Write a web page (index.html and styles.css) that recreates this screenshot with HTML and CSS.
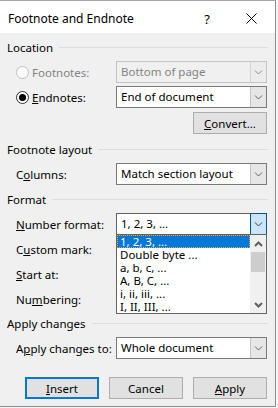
FILE: index.html
```html
<!DOCTYPE html>
<html>
<head>
    <link rel="stylesheet" href="styles.css">
</head>
<body>
    <div class="dialog">
        <div class="titlebar">
            <span class="title">Footnote and Endnote</span>
            <span class="help">?</span>
            <svg class="close" width="11" height="11" viewBox="0 0 11 11">
                <path d="M0.5 0.5 L10.5 10.5 M10.5 0.5 L0.5 10.5" stroke="#000" stroke-width="1" fill="none"/>
            </svg>
        </div>

        <div class="content">
            <div class="group-head"><span>Location</span></div>
            <div class="row first">
                <label class="label radio disabled"><span class="dot"></span>Footnotes:</label>
                <div class="combo disabled">
                    <span class="value">Bottom of page</span>
                    <span class="arrow"><svg width="9" height="5" viewBox="0 0 9 5"><path d="M1 0.5 L4.5 4 L8 0.5" fill="none" stroke="#8a8a8a"/></svg></span>
                </div>
            </div>
            <div class="row">
                <label class="label radio"><span class="dot checked"></span><span><u>E</u>ndnotes:</span></label>
                <div class="combo">
                    <span class="value">End of document</span>
                    <span class="arrow"><svg width="9" height="5" viewBox="0 0 9 5"><path d="M1 0.5 L4.5 4 L8 0.5" fill="none" stroke="#606060"/></svg></span>
                </div>
            </div>
            <div class="row right convert-row">
                <button class="btn"><u>C</u>onvert...</button>
            </div>

            <div class="group-head spaced"><span>Footnote layout</span></div>
            <div class="row first">
                <label class="label">C<u>o</u>lumns:</label>
                <div class="combo">
                    <span class="value">Match section layout</span>
                    <span class="arrow"><svg width="9" height="5" viewBox="0 0 9 5"><path d="M1 0.5 L4.5 4 L8 0.5" fill="none" stroke="#606060"/></svg></span>
                </div>
            </div>

            <div class="group-head"><span>Format</span></div>
            <div class="row first">
                <label class="label"><u>N</u>umber format:</label>
                <div class="combo open">
                    <span class="value">1, 2, 3, ...</span>
                    <span class="arrow"><svg width="9" height="5" viewBox="0 0 9 5"><path d="M1 0.5 L4.5 4 L8 0.5" fill="none" stroke="#404040"/></svg></span>
                    <div class="droplist">
                        <div class="items">
                            <div class="item selected">1, 2, 3, ...</div>
                            <div class="item">Double byte ...</div>
                            <div class="item">a, b, c, ...</div>
                            <div class="item">A, B, C, ...</div>
                            <div class="item">i, ii, iii, ...</div>
                            <div class="item">I, II, III, ...</div>
                        </div>
                        <div class="scrollbar">
                            <span class="sb-btn"><svg width="9" height="6" viewBox="0 0 9 6"><path d="M1 5 L4.5 1.5 L8 5" fill="none" stroke="#606060" stroke-width="2"/></svg></span>
                            <span class="thumb"></span>
                            <span class="track"></span>
                            <span class="sb-btn"><svg width="9" height="6" viewBox="0 0 9 6"><path d="M1 1 L4.5 4.5 L8 1" fill="none" stroke="#606060" stroke-width="2"/></svg></span>
                        </div>
                    </div>
                </div>
            </div>
            <div class="row">
                <label class="label">C<u>u</u>stom mark:</label>
            </div>
            <div class="row">
                <label class="label"><u>S</u>tart at:</label>
            </div>
            <div class="row">
                <label class="label">Nu<u>m</u>bering:</label>
            </div>

            <div class="group-head tight"><span>Apply changes</span></div>
            <div class="row first">
                <label class="label">A<u>p</u>ply changes to:</label>
                <div class="combo">
                    <span class="value">Whole document</span>
                    <span class="arrow"><svg width="9" height="5" viewBox="0 0 9 5"><path d="M1 0.5 L4.5 4 L8 0.5" fill="none" stroke="#606060"/></svg></span>
                </div>
            </div>

            <div class="buttons">
                <button class="btn default"><u>I</u>nsert</button>
                <button class="btn">Cancel</button>
                <button class="btn"><u>A</u>pply</button>
            </div>
        </div>
    </div>
</body>
</html>
```

FILE: styles.css
```css
body
{
    margin: 0;
    width: 278px;
    height: 408px;
    background-color: #f7f7f7;
    font-family: "Noto Sans", sans-serif;
    font-size: 11.5px;
    color: #000;
    overflow: hidden;
}
.dialog
{
    box-sizing: border-box;
    width: 276px;
    height: 407px;
    background-color: #f0f0f0;
    border-top: 1px solid #a8a8a8;
    border-right: 1px solid #8c8c8c;
    border-bottom: 1px solid #8c8c8c;
}
.titlebar
{
    box-sizing: border-box;
    height: 32px;
    padding: 3px 0 0 8px;
    background-color: #fff;
    display: flex;
    align-items: center;
}
.title
{
    flex: 1;
    font-size: 12px;
}
.help
{
    font-size: 13px;
    margin-right: 36px;
}
.close
{
    margin-right: 18px;
}
.content
{
    padding: 0 8px 0 7px;
}
.group-head
{
    display: flex;
    align-items: center;
    height: 16px;
    margin-top: 6px;
}
.group-head::after
{
    content: "";
    flex: 1;
    height: 1px;
    margin: 0 -1px 0 6px;
    background-color: #dcdcdc;
}
.group-head.spaced
{
    margin-top: 7px;
}
.group-head.tight
{
    margin-top: 5px;
}
.row
{
    display: flex;
    align-items: center;
    height: 22px;
    margin-top: 3px;
}
.row.first
{
    margin-top: 6px;
}
.row.right
{
    justify-content: flex-end;
}
.convert-row
{
    margin-top: 4px;
}
.label
{
    box-sizing: border-box;
    width: 109px;
    padding-left: 9px;
    display: flex;
    align-items: center;
}
.radio.disabled
{
    color: #838383;
}
.dot
{
    box-sizing: border-box;
    width: 13px;
    height: 13px;
    margin-right: 3px;
    border: 1px solid #333;
    border-radius: 50%;
    background-color: #fff;
    display: flex;
    align-items: center;
    justify-content: center;
}
.radio.disabled .dot
{
    border-color: #c2c2c2;
    background-color: #fcfcfc;
}
.dot.checked::after
{
    content: "";
    width: 7px;
    height: 7px;
    border-radius: 50%;
    background-color: #000;
}
.combo
{
    position: relative;
    box-sizing: border-box;
    width: 151px;
    height: 22px;
    border: 1px solid #7a7a7a;
    background-color: #fff;
    display: flex;
}
.combo.disabled
{
    border-color: #c4c4c4;
    background-color: #f0f0f0;
    color: #838383;
}
.combo .value
{
    flex: 1;
    padding-left: 4px;
    line-height: 20px;
}
.combo .arrow
{
    box-sizing: border-box;
    width: 16px;
    background-color: #e6e6e6;
    border-left: 1px solid #c4c4c4;
    display: flex;
    align-items: center;
    justify-content: center;
}
.combo.disabled .arrow
{
    background-color: #ececec;
    border-left-color: #d4d4d4;
}
.combo.open
{
    border-color: #646464;
}
.combo.open .arrow
{
    width: 17px;
    margin: -1px -1px -1px 0;
    background-color: #cce4f7;
    border: 1px solid #005499;
}
.droplist
{
    position: absolute;
    left: -1px;
    top: 20px;
    box-sizing: border-box;
    width: 151px;
    height: 80px;
    border: 1px solid #646464;
    background-color: #fff;
    display: flex;
    z-index: 2;
}
.items
{
    flex: 1;
}
.item
{
    height: 13px;
    line-height: 13px;
    padding-left: 3px;
    white-space: nowrap;
}
.item.selected
{
    background-color: #0078d7;
    color: #fff;
    outline: 1px dotted #f5a040;
    outline-offset: -1px;
}
.scrollbar
{
    width: 16px;
    background-color: #f0f0f0;
    display: flex;
    flex-direction: column;
}
.sb-btn
{
    height: 17px;
    display: flex;
    align-items: center;
    justify-content: center;
}
.thumb
{
    height: 20px;
    margin: 0 1px;
    background-color: #cdcdcd;
}
.track
{
    flex: 1;
}
.btn
{
    box-sizing: border-box;
    width: 74px;
    height: 22px;
    padding: 0;
    background-color: #e1e1e1;
    border: 1px solid #adadad;
    font-family: inherit;
    font-size: 11.5px;
    color: #000;
}
.btn.default
{
    border: 2px solid #0078d7;
}
.buttons
{
    display: flex;
    justify-content: flex-end;
    gap: 10px;
    margin-top: 18px;
}
```
